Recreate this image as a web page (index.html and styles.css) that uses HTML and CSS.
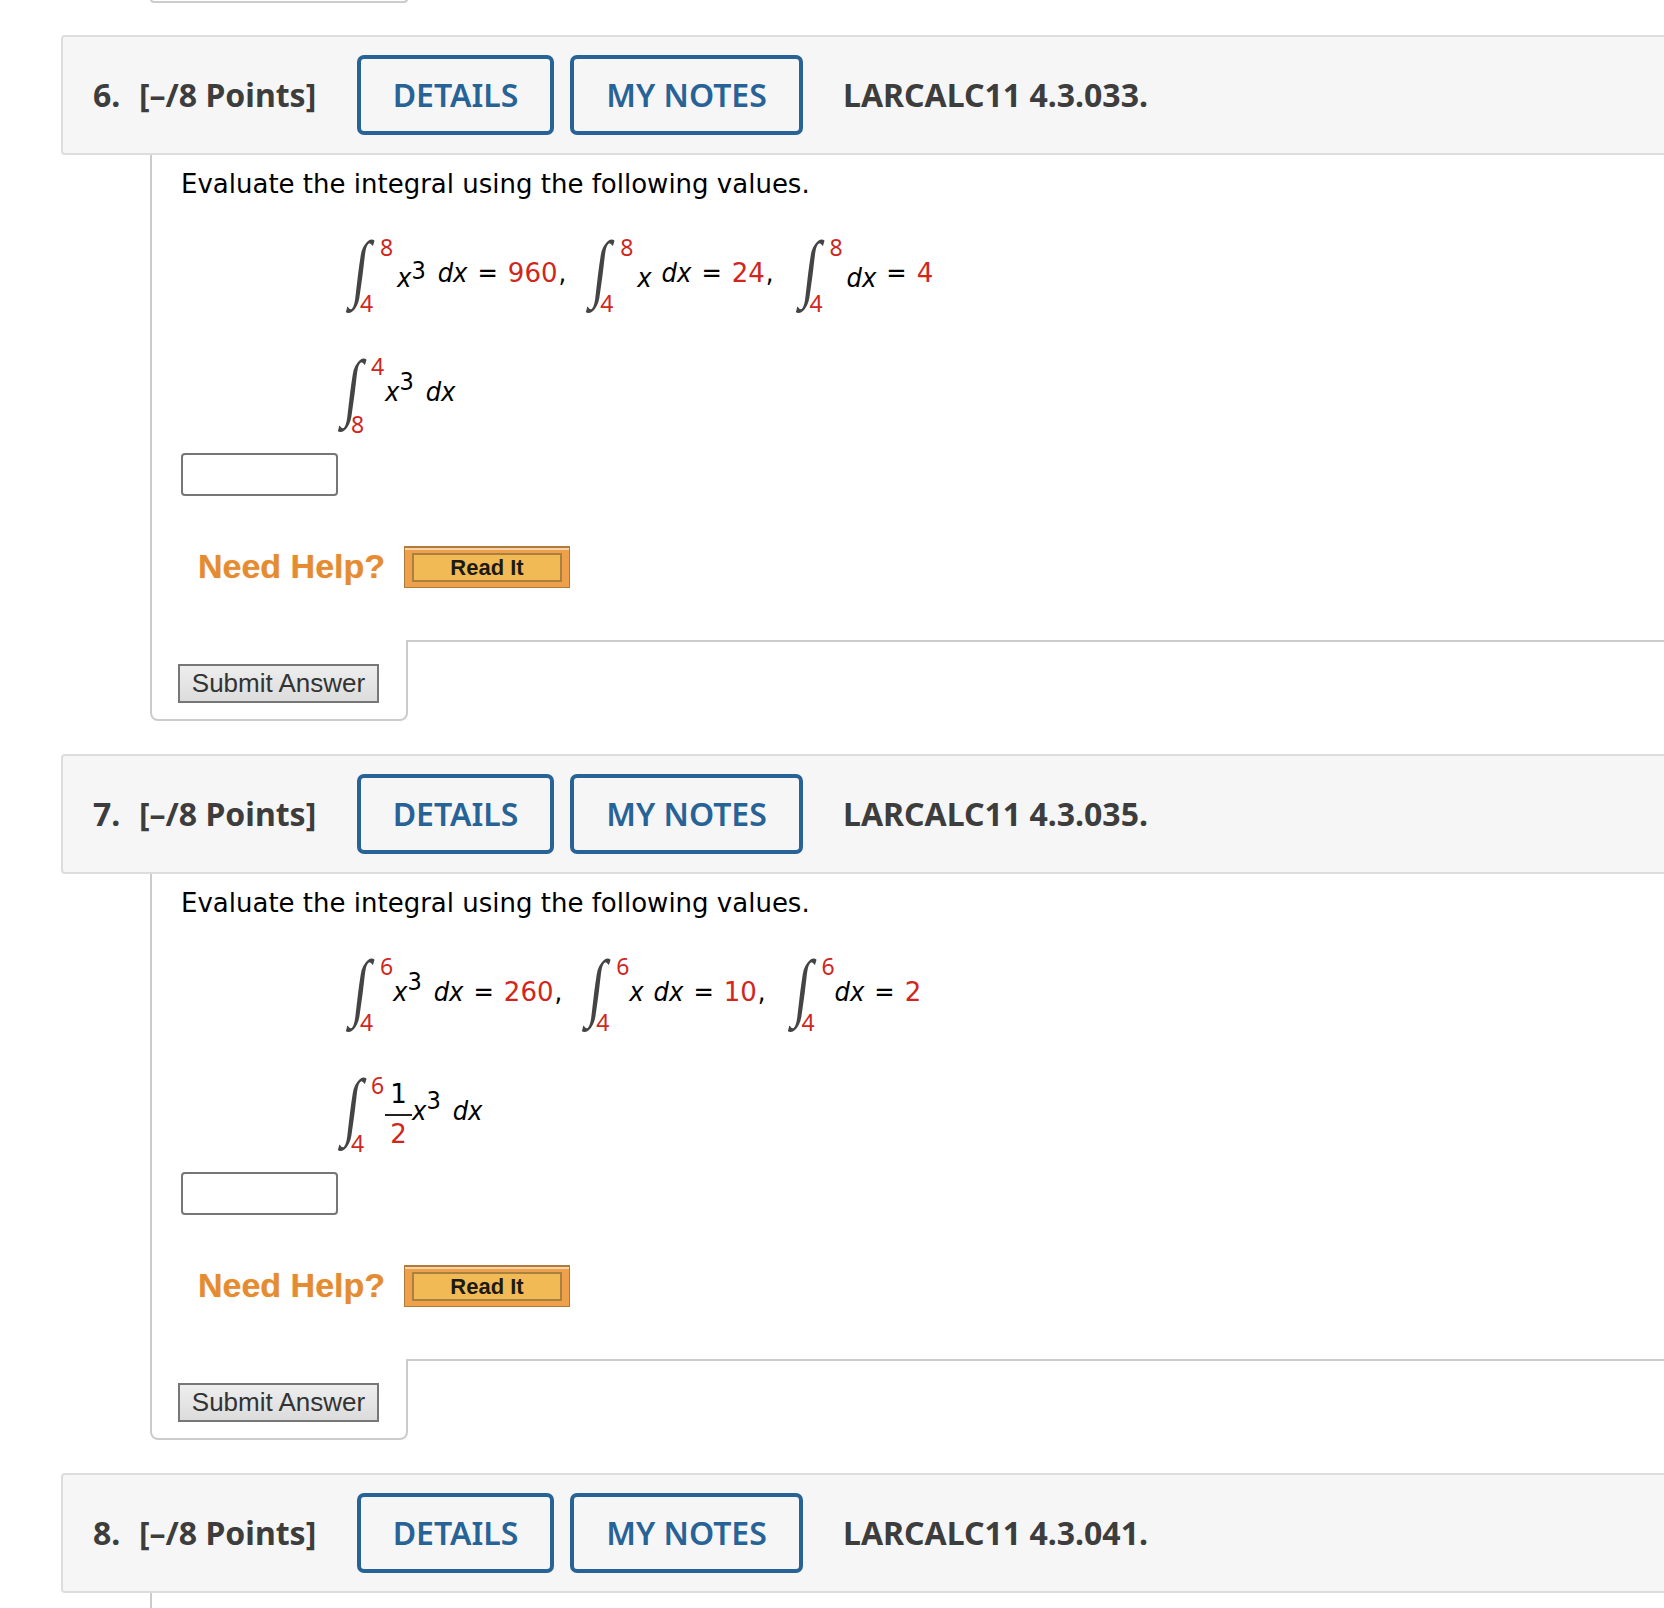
FILE: index.html
```html
<!DOCTYPE html>
<html lang="en">
<head>
    <meta charset="UTF-8">
    <meta name="viewport" content="width=device-width, initial-scale=1.0">
    <title>Assignment - Questions 6 to 8</title>
    <link rel="stylesheet" href="styles.css">
</head>
<body>
    <div class="prev-end"></div>

    <div class="question">
        <div class="q-head">
            <span class="q-num">6.</span>
            <span class="q-points">[–/8 Points]</span>
            <a class="q-btn q-btn-details">DETAILS</a>
            <a class="q-btn q-btn-notes">MY NOTES</a>
            <span class="q-ref">LARCALC11 4.3.033.</span>
        </div>
        <div class="q-body">
            <p class="q-text">Evaluate the integral using the following values.</p>
            <div class="math-row row-given">
                <span class="int"><i class="int-sign">∫</i><b class="lim-top">8</b><b class="lim-bot">4</b></span>
                <span class="term low">x<sup>3</sup></span><span class="term gap-s">dx</span><span class="term gap-m">=</span><span class="red gap-m">960</span><span class="comma">,</span>
                <span class="int int-next"><i class="int-sign">∫</i><b class="lim-top">8</b><b class="lim-bot">4</b></span>
                <span class="term low">x</span><span class="term gap-x">dx</span><span class="term gap-m">=</span><span class="red gap-m">24</span><span class="comma">,</span>
                <span class="int int-next int-last"><i class="int-sign">∫</i><b class="lim-top">8</b><b class="lim-bot">4</b></span>
                <span class="term low">dx</span><span class="term gap-m">=</span><span class="red gap-m">4</span>
            </div>
            <div class="math-row row-ask">
                <span class="int"><i class="int-sign">∫</i><b class="lim-top">4</b><b class="lim-bot">8</b></span>
                <span class="term">x<sup>3</sup></span><span class="term gap-s">dx</span>
            </div>
            <input class="answer" type="text">
            <div class="help">
                <span class="help-label">Need Help?</span>
                <a class="read-it"><span class="read-it-inner">Read It</span></a>
            </div>
        </div>
        <div class="q-foot">
            <div class="submit-box"><button class="submit">Submit Answer</button></div>
            <div class="foot-line"></div>
        </div>
    </div>

    <div class="question">
        <div class="q-head">
            <span class="q-num">7.</span>
            <span class="q-points">[–/8 Points]</span>
            <a class="q-btn q-btn-details">DETAILS</a>
            <a class="q-btn q-btn-notes">MY NOTES</a>
            <span class="q-ref">LARCALC11 4.3.035.</span>
        </div>
        <div class="q-body">
            <p class="q-text">Evaluate the integral using the following values.</p>
            <div class="math-row row-given">
                <span class="int int-tight"><i class="int-sign">∫</i><b class="lim-top">6</b><b class="lim-bot">4</b></span>
                <span class="term">x<sup>3</sup></span><span class="term gap-s">dx</span><span class="term gap-m">=</span><span class="red gap-m">260</span><span class="comma">,</span>
                <span class="int int-tight int-next"><i class="int-sign">∫</i><b class="lim-top">6</b><b class="lim-bot">4</b></span>
                <span class="term">x</span><span class="term gap-x">dx</span><span class="term gap-m">=</span><span class="red gap-m">10</span><span class="comma">,</span>
                <span class="int int-tight int-next int-last"><i class="int-sign">∫</i><b class="lim-top">6</b><b class="lim-bot">4</b></span>
                <span class="term">dx</span><span class="term gap-m">=</span><span class="red gap-m">2</span>
            </div>
            <div class="math-row row-ask">
                <span class="int"><i class="int-sign">∫</i><b class="lim-top">6</b><b class="lim-bot">4</b></span>
                <span class="frac"><span class="frac-top">1</span><span class="frac-bot red">2</span></span><span class="term">x<sup>3</sup></span><span class="term gap-s">dx</span>
            </div>
            <input class="answer" type="text">
            <div class="help">
                <span class="help-label">Need Help?</span>
                <a class="read-it"><span class="read-it-inner">Read It</span></a>
            </div>
        </div>
        <div class="q-foot">
            <div class="submit-box"><button class="submit">Submit Answer</button></div>
            <div class="foot-line"></div>
        </div>
    </div>

    <div class="question last">
        <div class="q-head">
            <span class="q-num">8.</span>
            <span class="q-points">[–/8 Points]</span>
            <a class="q-btn q-btn-details">DETAILS</a>
            <a class="q-btn q-btn-notes">MY NOTES</a>
            <span class="q-ref">LARCALC11 4.3.041.</span>
        </div>
        <div class="q-stub"></div>
    </div>
</body>
</html>
```

FILE: styles.css
```css
html, body {
    margin: 0;
    padding: 0;
    overflow: hidden;
    background-color: white;
}
body {
    width: 1664px;
    height: 1608px;
    font-family: 'DejaVu Sans', sans-serif;
    color: #000;
}
.prev-end {
    box-sizing: border-box;
    width: 258px;
    height: 4px;
    margin: -1px 0 32px 150px;
    border: 2px solid #ccc;
    border-top: none;
    border-radius: 0 0 6px 6px;
}
.question {
    margin-bottom: 33px;
}
.question.last {
    margin-bottom: 0;
}
.q-head {
    box-sizing: border-box;
    display: flex;
    align-items: center;
    width: 1680px;
    height: 120px;
    margin-left: 61px;
    padding-left: 30px;
    background-color: #f6f6f6;
    border: 2px solid #ddd;
    border-radius: 4px;
    font-family: 'Noto Sans', sans-serif;
    font-size: 32px;
    font-weight: 700;
    color: #3d3d3d;
}
.q-num {
    width: 46px;
    margin-bottom: 2px;
}
.q-points {
    width: 218px;
    margin-bottom: 2px;
}
.q-ref {
    margin-bottom: 2px;
}
.q-btn {
    box-sizing: border-box;
    display: flex;
    align-items: center;
    justify-content: center;
    height: 80px;
    padding-bottom: 2px;
    border: 4px solid #286397;
    border-radius: 7px;
    font-weight: 600;
    color: #286397;
}
.q-btn-details {
    width: 197px;
    margin-right: 16px;
}
.q-btn-notes {
    width: 233px;
    margin-right: 40px;
}
.q-body {
    box-sizing: border-box;
    height: 485px;
    margin-left: 150px;
    padding-left: 29px;
    border-left: 2px solid #ccc;
}
.q-text {
    margin: 0;
    padding-top: 11px;
    font-size: 26px;
    line-height: 36px;
}
.math-row {
    display: flex;
    align-items: baseline;
    font-family: 'DejaVu Sans', sans-serif;
    font-stretch: condensed;
    font-size: 27px;
}
.row-given {
    height: 74px;
    margin: 55px 0 0 165px;
}
.row-ask {
    height: 74px;
    margin: 45px 0 0 157px;
}
.term {
    font-style: italic;
}
.term sup {
    font-style: normal;
    font-size: 25px;
    line-height: 0;
    vertical-align: 11px;
}
.low {
    position: relative;
    top: 5px;
}
.low sup {
    vertical-align: 8px;
}
.gap-s {
    margin-left: 12px;
}
.gap-x {
    margin-left: 10px;
}
.gap-m {
    margin-left: 10px;
}
.comma {
    margin-left: 1px;
}
.red {
    font-stretch: normal;
    font-size: 26px;
    color: #d0261c;
}
.int {
    position: relative;
    display: inline-block;
    width: 51px;
    height: 74px;
    align-self: flex-start;
}
.int-tight {
    width: 47px;
}
.int-next {
    margin-left: 20px;
}
.int-last {
    margin-left: 22px;
}
.row-ask .int {
    width: 47px;
}
.int-sign {
    position: absolute;
    left: 5px;
    top: -37px;
    font-family: 'Liberation Serif', serif;
    font-size: 75px;
    font-style: normal;
    font-weight: normal;
    line-height: 96px;
    color: #444;
    transform: skewX(-7deg) scaleX(0.7);
}
.lim-top, .lim-bot {
    position: absolute;
    font-family: 'Noto Sans', sans-serif;
    font-size: 23px;
    font-weight: normal;
    line-height: 24px;
    color: #d0261c;
}
.lim-top {
    left: 34px;
    top: -22px;
}
.lim-bot {
    left: 14px;
    bottom: 16px;
}
.row-ask .lim-top {
    left: 33px;
    top: -22px;
}
.row-ask .lim-bot {
    left: 13px;
    bottom: 14px;
}
.frac {
    display: flex;
    flex-direction: column;
    width: 27px;
    margin-top: -17px;
    align-self: flex-start;
    font-size: 26px;
    font-stretch: normal;
    line-height: 36px;
    text-align: center;
}
.frac-top {
    line-height: 32px;
    padding-bottom: 4px;
    border-bottom: 2px solid #222;
}
.answer {
    display: block;
    box-sizing: border-box;
    width: 157px;
    height: 43px;
    margin: 3px 0 0 0;
    padding: 0;
    border: 2px solid #767676;
    border-radius: 4px;
    background-color: white;
}
.help {
    display: flex;
    align-items: center;
    margin: 49px 0 0 17px;
}
.help-label {
    width: 206px;
    margin-bottom: 2px;
    font-family: 'Liberation Sans', sans-serif;
    font-size: 34px;
    font-weight: bold;
    line-height: 42px;
    color: #e58c33;
    text-shadow: 0 0 1px rgba(229, 140, 51, 0.5);
}
.read-it {
    box-sizing: border-box;
    display: flex;
    width: 166px;
    height: 42px;
    padding: 5px 7px 5px 7px;
    background-color: #eea04a;
    border: 1px solid #b07a3a;
    border-top: 2px solid #b07a3a;
    box-shadow: inset 0 2px 0 #f6d3a8;
}
.read-it-inner {
    box-sizing: border-box;
    flex: 1;
    display: flex;
    align-items: center;
    justify-content: center;
    background-color: #f2ba55;
    border: 2px solid #a8803f;
    font-family: 'Liberation Sans', sans-serif;
    font-size: 22px;
    font-weight: bold;
    color: #1c1a12;
}
.q-foot {
    display: flex;
    height: 81px;
    margin-left: 150px;
}
.submit-box {
    box-sizing: border-box;
    width: 258px;
    height: 81px;
    padding: 24px 0 0 26px;
    border: 2px solid #ccc;
    border-top: none;
    border-radius: 0 0 8px 8px;
}
.foot-line {
    flex: 1;
    border-top: 2px solid #ccc;
    margin-left: -2px;
}
.submit {
    box-sizing: border-box;
    width: 201px;
    height: 39px;
    padding: 0;
    border: 2px solid #777;
    border-radius: 0;
    background: linear-gradient(#eeeeee, #dcdcdc);
    font-family: 'Liberation Sans', sans-serif;
    font-size: 26px;
    color: #333;
}
.q-stub {
    height: 15px;
    margin-left: 150px;
    border-left: 2px solid #ccc;
}
```
